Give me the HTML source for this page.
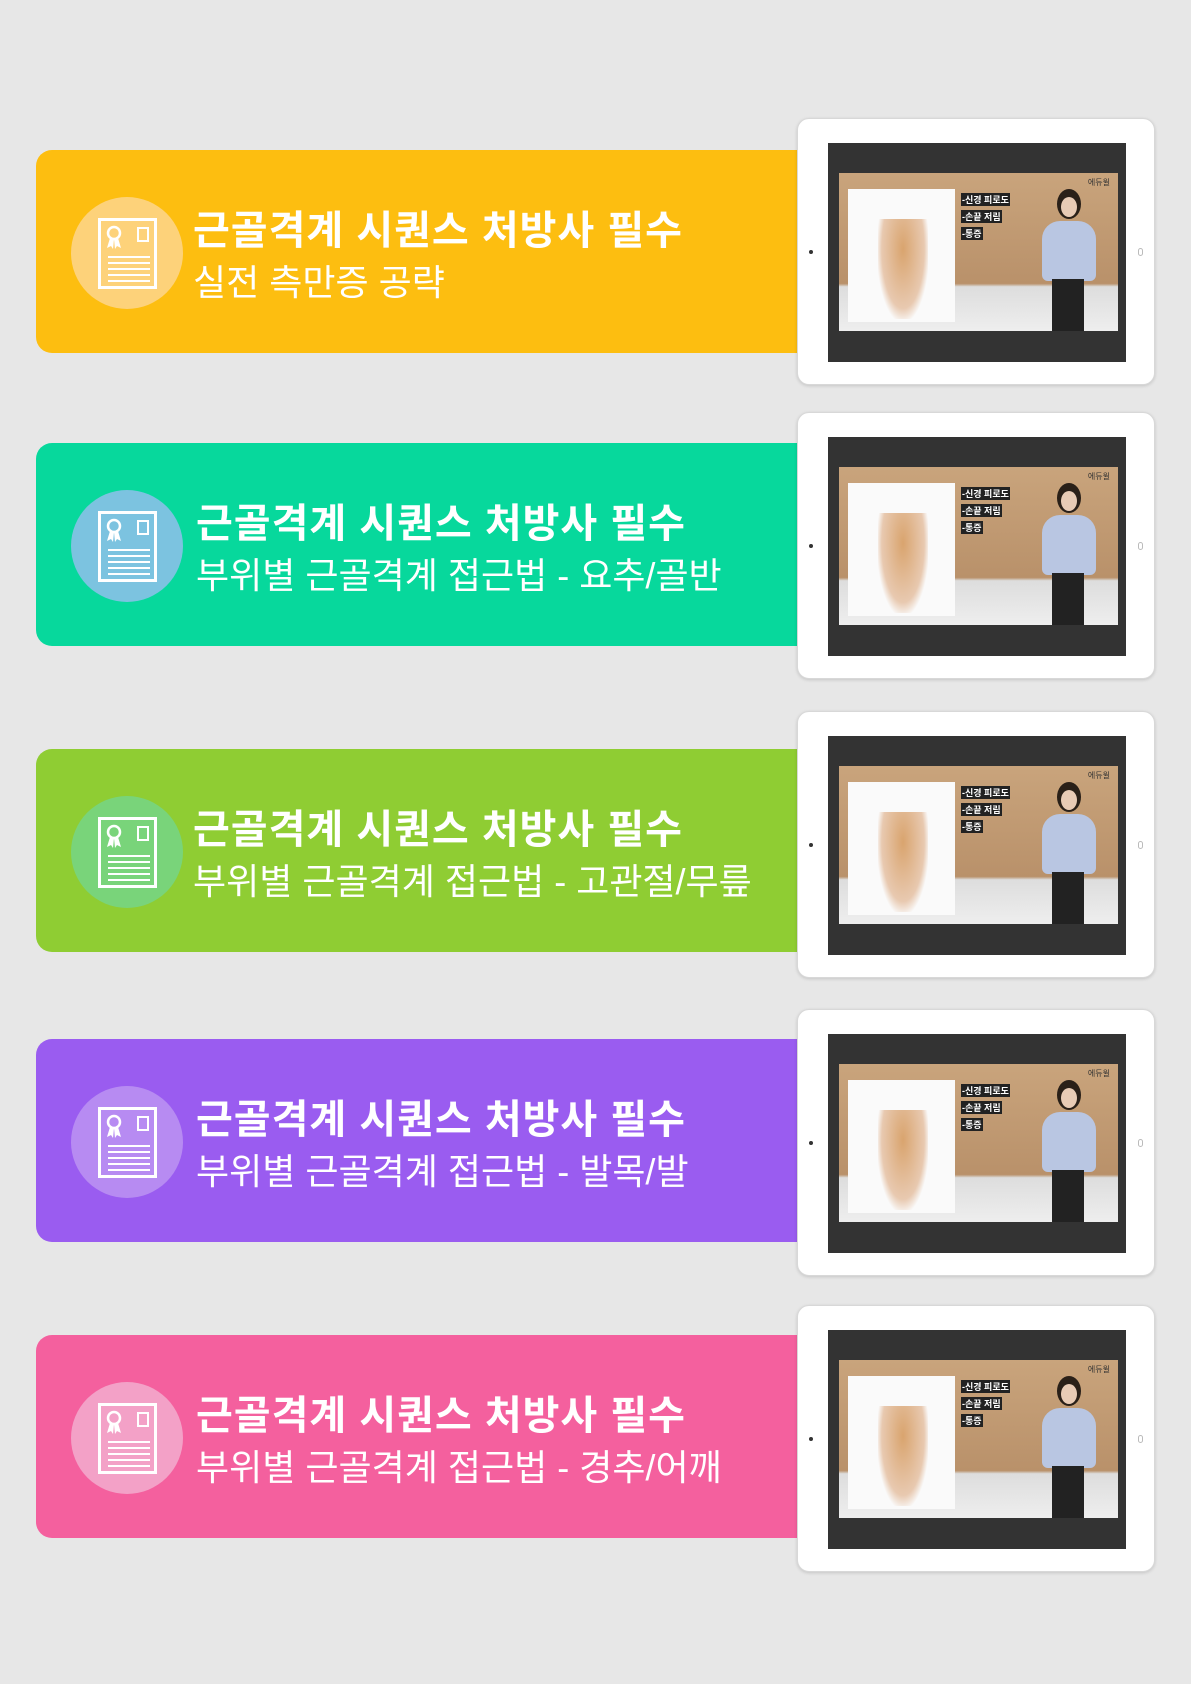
<!DOCTYPE html>
<html><head><meta charset="utf-8"><style>
*{margin:0;padding:0;box-sizing:border-box}
body{width:1191px;height:1684px;background:#e7e7e7;position:relative;overflow:hidden;font-family:"Liberation Sans","Noto Sans CJK KR",sans-serif}
.card{position:absolute;left:36px;width:770px;height:203px;border-radius:16px 0 0 16px}
.circ{position:absolute;left:35px;top:47px;width:112px;height:112px;border-radius:50%}
.doc{position:absolute;left:27px;top:21px;width:59px;height:71px;border:3px solid #fff;}
.t1{position:absolute;left:157px;top:48px;color:#fff;font-size:40px;font-weight:bold;white-space:nowrap;letter-spacing:1px}
.t2{position:absolute;left:157px;top:104px;color:#fff;font-size:36px;white-space:nowrap}
.tab{position:absolute;left:797px;width:358px;height:267px;background:#fff;border-radius:12px;border:1px solid #d8d8d8;box-shadow:0 1px 3px rgba(0,0,0,.15)}
.scr{position:absolute;left:30px;top:24px;width:298px;height:219px;background:#333}
.vid{position:absolute;left:11px;top:30px;width:279px;height:158px;background:linear-gradient(#c9a47c,#b9916a 70%,#ddd 72%,#eee)}
.paper{position:absolute;left:9px;top:16px;width:107px;height:133px;background:#fafafa}
.body1{position:absolute;left:30px;top:30px;width:50px;height:100px;background:radial-gradient(ellipse at 50% 30%,#d9a46e,#e8c9b0 60%,#fafafa 75%)}
.bul{position:absolute;left:122px;color:#fff;font-size:9px;font-weight:bold;background:#222;padding:0 1px}
.per{position:absolute;left:198px;top:14px;width:62px;height:144px}
.dot{position:absolute;left:11px;top:131px;width:4px;height:4px;border-radius:50%;background:#333}
.btn{position:absolute;right:11px;top:129px;width:5px;height:8px;border:1px solid #bbb;border-radius:3px}
</style></head><body>

<div class="card" style="top:150px;background:#fdbe10"><div class="circ" style="background:#fdd27a"><div class="doc"></div></div><div class="t1">근골격계 시퀀스 처방사 필수</div><div class="t2">실전 측만증 공략</div></div>
<div class="card" style="top:443px;background:#07d89c"><div class="circ" style="background:#7cc3e0"><div class="doc"></div></div><div class="t1" style="left:160px">근골격계 시퀀스 처방사 필수</div><div class="t2" style="left:160px">부위별 근골격계 접근법 - 요추/골반</div></div>
<div class="card" style="top:749px;background:#8fcd33"><div class="circ" style="background:#79d47a"><div class="doc"></div></div><div class="t1">근골격계 시퀀스 처방사 필수</div><div class="t2">부위별 근골격계 접근법 - 고관절/무릎</div></div>
<div class="card" style="top:1039px;background:#9a5cf0"><div class="circ" style="background:#b78bf2"><div class="doc"></div></div><div class="t1" style="left:160px">근골격계 시퀀스 처방사 필수</div><div class="t2" style="left:160px">부위별 근골격계 접근법 - 발목/발</div></div>
<div class="card" style="top:1335px;background:#f4609e"><div class="circ" style="background:#f3a1c7"><div class="doc"></div></div><div class="t1" style="left:160px">근골격계 시퀀스 처방사 필수</div><div class="t2" style="left:160px">부위별 근골격계 접근법 - 경추/어깨</div></div>

<svg width="0" height="0" style="position:absolute"><defs>
<g id="cert"><circle cx="13" cy="12" r="6" fill="none" stroke="#fff" stroke-width="2.5"/><path d="M9 17 L6 27 L10 25 L12 28 L13 18 M17 17 L20 27 L16 25 L14 28 L13 18" fill="#fff"/><rect x="37" y="7" width="10" height="13" fill="none" stroke="#fff" stroke-width="2"/><path d="M7 36H49M7 42H49M7 48H49M7 54H49M7 60H49" stroke="#fff" stroke-width="2"/></g>
</defs></svg>
<style>.doc svg{position:absolute;left:0;top:0}</style>
<script>
document.querySelectorAll('.doc').forEach(d=>{d.innerHTML='<svg width="56" height="68" viewBox="0 0 56 68"><use href="#cert"/></svg>'});
var tops=[118,412,711,1009,1305];
tops.forEach(t=>{var e=document.createElement('div');e.className='tab';e.style.top=t+'px';
e.innerHTML='<div class="dot"></div><div class="btn"></div><div class="scr"><div class="vid"><div class="paper"><div class="body1"></div></div><div class="bul" style="top:20px">-신경 피로도</div><div class="bul" style="top:37px">-손끝 저림</div><div class="bul" style="top:54px">-통증</div><div class="per"><div style="position:absolute;left:20px;top:2px;width:24px;height:30px;border-radius:50%;background:#2a2018"></div><div style="position:absolute;left:24px;top:10px;width:16px;height:20px;border-radius:50%;background:#e8cbb5"></div><div style="position:absolute;left:5px;top:34px;width:54px;height:60px;border-radius:18px 18px 6px 6px;background:#b9c6e2"></div><div style="position:absolute;left:15px;top:92px;width:32px;height:52px;background:#222"></div></div><div style="position:absolute;right:8px;top:4px;font-size:8px;color:#333">에듀윌</div></div></div>';
document.body.appendChild(e);});
</script>
</body></html>
